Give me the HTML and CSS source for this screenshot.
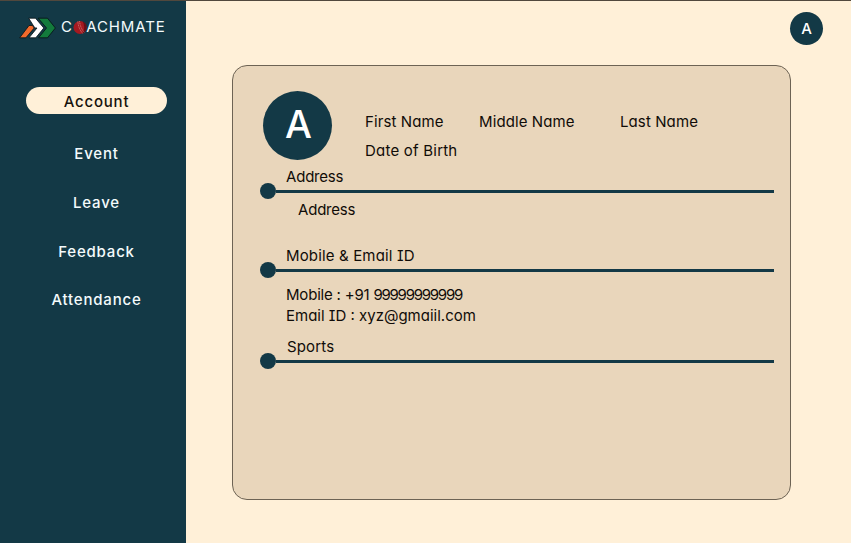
FILE: index.html
```html
<!DOCTYPE html>
<html lang="en">
<head>
<meta charset="utf-8">
<title>Coachmate</title>
<link rel="stylesheet" href="styles.css">
</head>
<body>
<div class="app">
  <aside class="sidebar">
    <div class="brand">
      <svg class="brand-mark" width="37" height="22" viewBox="0 0 37 22" aria-hidden="true">
        <g stroke="#061014" stroke-width="0.8">
          <path fill="#f26a2b" d="M0.7 20.8 10 8.5H13.5L15.2 11 6.9 20.8Z"/>
          <path fill="#fff" d="M9.7 1.2H16.5L24.8 11 16.8 20.8H10L18 11H16L14.6 9Z"/>
          <path fill="#137a3c" d="M19.2 1.2H28.5L36.4 11 28.5 20.8H19.6L27.5 11Z"/>
        </g>
      </svg>
      <div class="brand-name"><span>C</span><svg class="ball" width="14" height="15" viewBox="0 0 13 14" aria-hidden="true">
        <circle cx="6.5" cy="7" r="6.1" fill="#a51920"/>
        <path d="M9 1.5A6 6 0 0 1 9 12.5Q12 7 9 1.5" fill="#661018"/>
        <path d="M4.5 1.5Q5 8 9 12.5M6 1Q7 8 10.5 11.5" fill="none" stroke="#dfa59b" stroke-width=".6" stroke-dasharray="1 .6"/>
      </svg><span>ACHMATE</span></div>
    </div>
    <nav class="nav">
      <a class="nav-item active">Account</a>
      <a class="nav-item">Event</a>
      <a class="nav-item">Leave</a>
      <a class="nav-item">Feedback</a>
      <a class="nav-item">Attendance</a>
    </nav>
  </aside>
  <main class="main">
    <header class="topbar"><div class="avatar small">A</div></header>
    <section class="card">
      <div class="profile">
        <div class="avatar large">A</div>
        <div class="names">
          <span>First Name</span><span>Middle Name</span><span>Last Name</span>
          <span class="birth">Date of Birth</span>
        </div>
      </div>
      <section class="group address">
        <h2>Address</h2>
        <div class="rule"></div>
        <p class="indent">Address</p>
      </section>
      <section class="group contact">
        <h2 class="contact-title">Mobile &amp; Email ID</h2>
        <div class="rule"></div>
        <p class="mobile">Mobile : +91 <span class="number">99999999999</span></p>
        <p>Email ID : xyz@gmaiil.com</p>
      </section>
      <section class="group sports">
        <h2>Sports</h2>
        <div class="rule"></div>
      </section>
    </section>
  </main>
</div>
</body>
</html>
```

FILE: styles.css
```css
* { box-sizing: border-box; }
body { margin: 0; font-family: Inter, "Liberation Sans", sans-serif; }
.app { display: flex; width: 851px; height: 543px; background: #fff0d8; border-top: 1px solid #51483d; overflow: hidden; }
.sidebar { width: 186px; flex: none; background: #133946; color: #f4fbfc; }
.brand { display: flex; align-items: center; height: 22px; margin: 16px 0 0 19px; }
.brand-mark { flex: none; }
.brand-name { display: flex; align-items: center; margin: -2px 0 0 5px; font-size: 15px; letter-spacing: .85px; line-height: 20px; }
.ball { flex: none; margin: 0 -.5px 0 0; }
.nav { display: flex; flex-direction: column; align-items: center; gap: 21.6px; margin: 48px 0 0 26px; width: 141px; }
.nav-item { display: flex; align-items: center; justify-content: center; width: 100%; height: 27px; padding-top: 1.5px; font-size: 15px; font-weight: 450; letter-spacing: .8px; }
.nav-item.active { border-radius: 14px; background: #fff0d8; color: #17110c; margin-bottom: 4px; font-weight: 500; }
.main { flex: 1; padding-left: 46px; }
.topbar { display: flex; justify-content: flex-end; height: 64px; padding: 11px 28px 0 0; }
.avatar { display: flex; align-items: center; justify-content: center; flex: none; border-radius: 50%; background: #133946; color: white; }
.avatar.small { width: 33px; height: 33px; font-size: 15px; font-weight: 500; }
.avatar.large { width: 69px; height: 69px; padding: 0 0 2px 2px; font-size: 38px; font-weight: 450; }
.card { width: 559px; height: 435px; padding: 25px 16px 0 30px; border: 1px solid #6d6354; border-radius: 15px; background: #e9d6bb; color: #100c08; font-size: 15px; line-height: 21px; font-feature-settings: "cv11", "cv08"; }
.profile { display: flex; height: 75px; }
.names { display: grid; grid-template-columns: 114px 141px auto; align-content: start; row-gap: 8px; margin: 20px 0 0 33px; letter-spacing: .1px; }
.birth { grid-column: 1 / -1; letter-spacing: .22px; }
.group { margin-left: -3px; }
h2, p { margin: 0; font: inherit; }
h2 { padding-left: 26px; height: 17px; line-height: 22px; }
p { padding-left: 26px; }
.rule { display: flex; align-items: center; height: 16px; }
.rule::before { content: ""; width: 16px; height: 16px; border-radius: 50%; background: #133946; }
.rule::after { content: ""; flex: 1; height: 3px; background: #133946; }
.address { height: 79px; letter-spacing: -.2px; }
.indent { padding-left: 38px; }
.contact { height: 91px; }
.contact-title { letter-spacing: .15px; }
.mobile { margin-top: 6px; letter-spacing: -.2px; }
.number { margin-left: 0; letter-spacing: -1.25px; }
.sports h2 { padding-left: 27px; letter-spacing: .15px; }
```
